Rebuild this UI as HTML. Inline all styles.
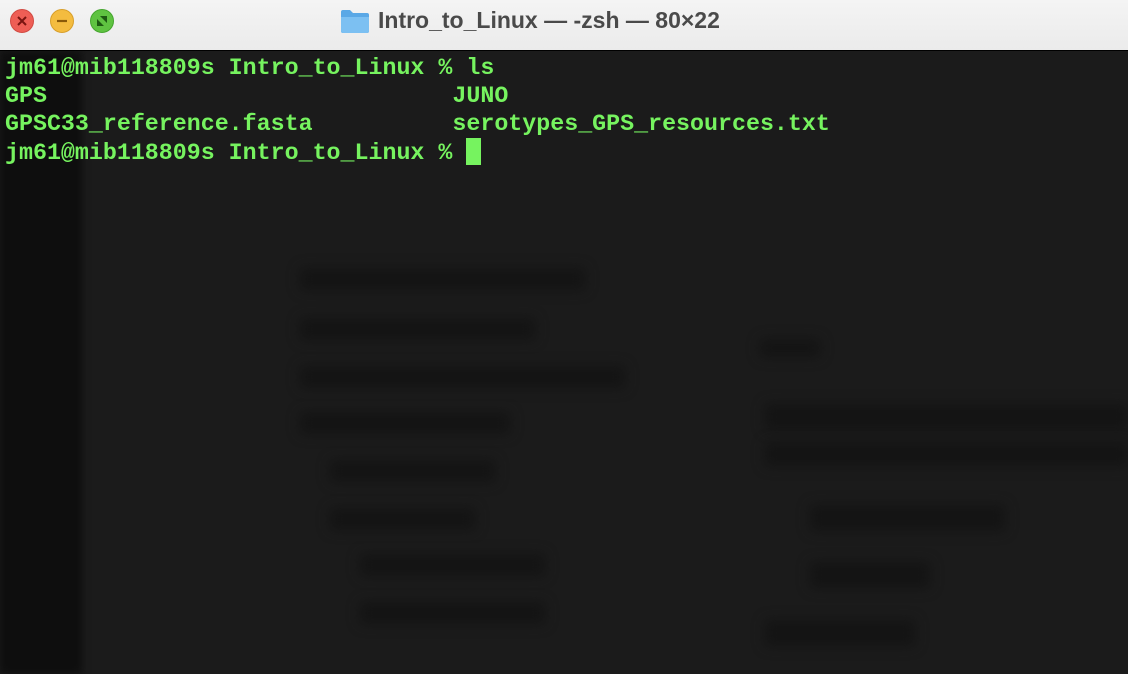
<!DOCTYPE html>
<html><head><meta charset="utf-8"><style>
html,body{margin:0;padding:0;width:1128px;height:674px;overflow:hidden;background:#1b1b1b;}
.title{position:absolute;left:0;top:0;width:1128px;height:50px;background:linear-gradient(#f4f4f4,#ebebeb);border-bottom:1px solid #000;}
.btn{position:absolute;top:9px;width:24px;height:24px;border-radius:50%;box-sizing:border-box;}
.t{position:absolute;left:378px;top:7px;font:bold 23px "Liberation Sans",sans-serif;color:#4a4a4a;white-space:nowrap;}
.term{position:absolute;left:0;top:51px;width:1128px;height:623px;background:#1b1b1b;overflow:hidden;}
.strip{position:absolute;left:0;top:0;width:82px;height:623px;background:#0e0e0e;filter:blur(4px);}
.b{position:absolute;background:#141414;filter:blur(6px);border-radius:4px;}
pre{position:absolute;left:5px;top:3px;margin:0;font:bold 23.3px/28px "Liberation Mono",monospace;color:#76f35f;}
.cur{display:inline-block;width:15px;height:27px;background:#76f35f;vertical-align:-6px;}
</style></head><body>
<div class="title">
 <div class="btn" style="left:10px;background:#ee5e55;border:1px solid #d14a42"><svg width="22" height="22"><path d="M7 7L15 15M15 7L7 15" stroke="#7a1410" stroke-width="2"/></svg></div>
 <div class="btn" style="left:50px;background:#f4bc3f;border:1px solid #d89f2a"><svg width="22" height="22"><path d="M6 11H16" stroke="#8a5a08" stroke-width="2.2"/></svg></div>
 <div class="btn" style="left:90px;background:#5fc341;border:1px solid #45a52e"><svg width="22" height="22"><path d="M6 16V9L13 16ZM16 6V13L9 6Z" fill="#1d5a12"/></svg></div>
 <svg style="position:absolute;left:340px;top:8px" width="30" height="26"><path d="M1 4Q1 2 3 2H10L13 5H27Q29 5 29 7V23Q29 25 27 25H3Q1 25 1 23Z" fill="#5aa8e6"/><path d="M1 9H29V23Q29 25 27 25H3Q1 25 1 23Z" fill="#7cc0f2"/></svg>
 <div class="t">Intro_to_Linux — -zsh — 80×22</div>
</div>
<div class="term">
 <div class="strip"></div>
 <div class="b" style="left:300px;top:217px;width:285px;height:22px"></div>
 <div class="b" style="left:300px;top:267px;width:235px;height:22px"></div>
 <div class="b" style="left:300px;top:315px;width:325px;height:22px"></div>
 <div class="b" style="left:300px;top:361px;width:210px;height:22px"></div>
 <div class="b" style="left:330px;top:409px;width:165px;height:22px"></div>
 <div class="b" style="left:330px;top:457px;width:145px;height:22px"></div>
 <div class="b" style="left:360px;top:503px;width:185px;height:22px"></div>
 <div class="b" style="left:360px;top:551px;width:185px;height:22px"></div>
 <div class="b" style="left:765px;top:353px;width:363px;height:26px"></div>
 <div class="b" style="left:765px;top:391px;width:363px;height:24px"></div>
 <div class="b" style="left:810px;top:454px;width:195px;height:26px"></div>
 <div class="b" style="left:810px;top:511px;width:120px;height:26px"></div>
 <div class="b" style="left:765px;top:569px;width:150px;height:26px"></div>
 <div class="b" style="left:760px;top:288px;width:60px;height:18px"></div>
 <pre>jm61@mib118809s Intro_to_Linux % ls
GPS                             JUNO
GPSC33_reference.fasta          serotypes_GPS_resources.txt
jm61@mib118809s Intro_to_Linux % <span class="cur"></span></pre>
</div>
</body></html>
